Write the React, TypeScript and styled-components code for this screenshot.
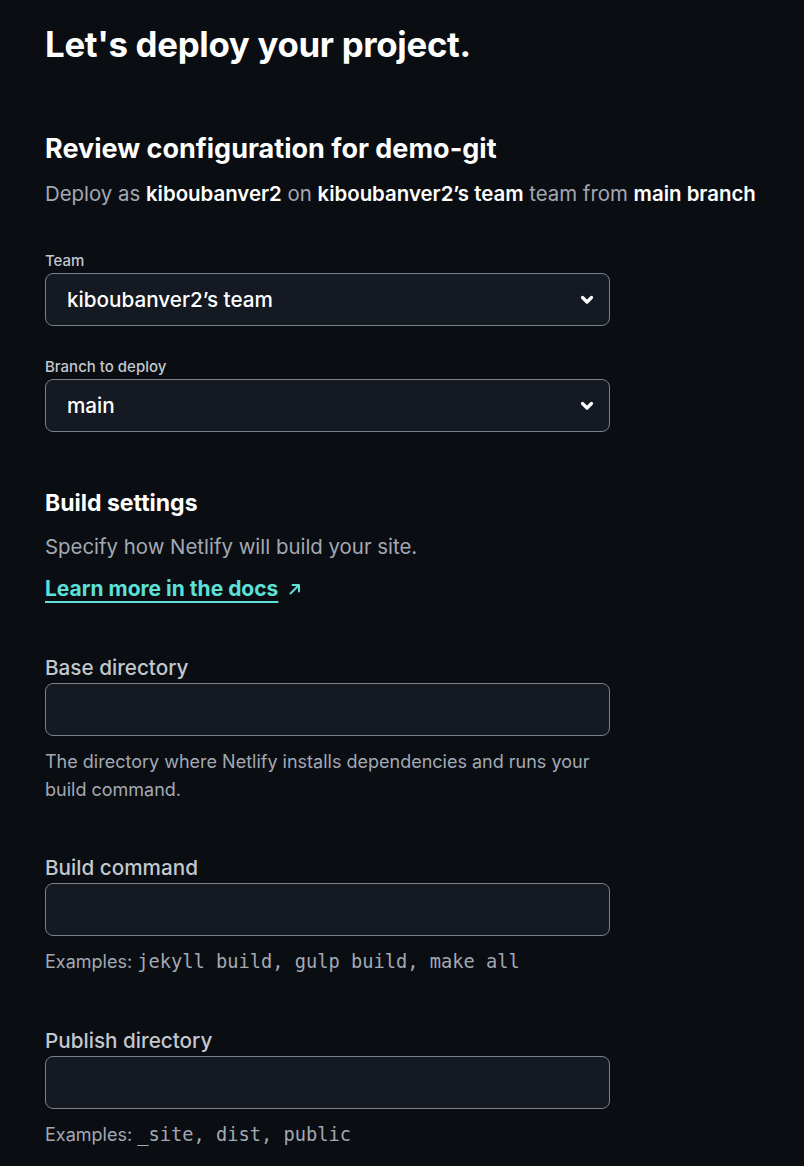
import React from "react";
import styled, { createGlobalStyle } from "styled-components";

const Global = createGlobalStyle`
  html, body { margin: 0; padding: 0; background: #0a0d12; }
  body { font-family: Inter, "Noto Sans", sans-serif; color: #ffffff; -webkit-font-smoothing: antialiased; }
`;

const Page = styled.main`
  min-height: 1166px;
  padding: 20px 45px 0 45px;
  box-sizing: border-box;
  background: #0a0d12;
`;

const Title = styled.h1`
  margin: 0;
  font-size: 34.8px;
  line-height: 48px;
  font-weight: 700;
  letter-spacing: -0.3px;
  color: #ffffff;
`;

const Section = styled.section<{ $top: number }>`
  margin-top: ${(p) => p.$top}px;
  display: flex;
  flex-direction: column;
`;

const Heading = styled.h2<{ $size: number }>`
  margin: 0;
  font-size: ${(p) => p.$size}px;
  line-height: 32px;
  font-weight: 700;
  color: #ffffff;
`;

const Lead = styled.p<{ $top: number }>`
  margin: ${(p) => p.$top}px 0 0 0;
  font-size: 20.4px;
  line-height: 28px;
  color: #a3a9b3;
  white-space: nowrap;
`;

const Strong = styled.strong`
  color: #ffffff;
  font-weight: 600;
`;

const Field = styled.div<{ $top: number }>`
  margin-top: ${(p) => p.$top}px;
  width: 565px;
  display: flex;
  flex-direction: column;
`;

const SmallLabel = styled.label`
  font-size: 15px;
  line-height: 20px;
  color: #c3c7ce;
  font-weight: 500;
  margin-bottom: 2px;
`;

const BigLabel = styled.label`
  font-size: 20.7px;
  line-height: 28px;
  color: #c3c7ce;
  font-weight: 500;
  margin-bottom: 1px;
`;

const SelectBox = styled.div`
  height: 53px;
  box-sizing: border-box;
  border: 1px solid #7b818b;
  border-radius: 8px;
  background: #151922;
  display: flex;
  align-items: center;
  justify-content: space-between;
  padding: 0 12px 0 21px;
  font-size: 20.7px;
  font-weight: 500;
  color: #ffffff;
`;

const Input = styled.div`
  height: 53px;
  box-sizing: border-box;
  border: 1px solid #7b818b;
  border-radius: 8px;
  background: #151922;
`;

const Help = styled.p`
  margin: 12px 0 0 0;
  font-size: 18px;
  line-height: 28px;
  color: #a3a9b3;
`;

const Mono = styled.code`
  font-family: "DejaVu Sans Mono", "Liberation Mono", monospace;
  font-size: 18.7px;
`;

const DocLink = styled.a`
  margin-top: 14px;
  display: inline-flex;
  align-items: center;
  gap: 9px;
  font-size: 21px;
  line-height: 28px;
  font-weight: 700;
  color: #5ce0d8;
  text-decoration: none;
`;

const LinkText = styled.span`
  text-decoration: underline;
  text-underline-offset: 5px;
  text-decoration-thickness: 2px;
`;

const Chevron = () => (
  <svg width="20" height="20" viewBox="0 0 20 20" fill="none">
    <path d="M5.5 7.5 L10 12 L14.5 7.5" stroke="#ffffff" strokeWidth="3.2" strokeLinecap="round" strokeLinejoin="round" />
  </svg>
);

const Arrow = () => (
  <svg width="16" height="16" viewBox="0 0 16 16" fill="none">
    <path d="M3.5 12.5 L12 4 M5.5 4 H12 V10.5" stroke="#5ce0d8" strokeWidth="2" strokeLinecap="round" strokeLinejoin="round" />
  </svg>
);

export default function App() {
  return (
    <>
      <Global />
      <Page>
        <Title>Let's deploy your project.</Title>

        <Section $top={65}>
          <Heading $size={27}>Review configuration for demo-git</Heading>
          <Lead $top={15}>
            Deploy as <Strong>kiboubanver2</Strong> on <Strong>kiboubanver2’s team</Strong> team from{" "}
            <Strong>main branch</Strong>
          </Lead>

          <Field $top={43}>
            <SmallLabel>Team</SmallLabel>
            <SelectBox>
              <span>kiboubanver2’s team</span>
              <Chevron />
            </SelectBox>
          </Field>

          <Field $top={31}>
            <SmallLabel>Branch to deploy</SmallLabel>
            <SelectBox>
              <span>main</span>
              <Chevron />
            </SelectBox>
          </Field>
        </Section>

        <Section $top={55}>
          <Heading $size={23}>Build settings</Heading>
          <Lead $top={14}>Specify how Netlify will build your site.</Lead>
          <div>
            <DocLink href="#">
              <LinkText>Learn more in the docs</LinkText>
              <Arrow />
            </DocLink>
          </div>

          <Field $top={51}>
            <BigLabel>Base directory</BigLabel>
            <Input />
            <Help>The directory where Netlify installs dependencies and runs your build command.</Help>
          </Field>

          <Field $top={50}>
            <BigLabel>Build command</BigLabel>
            <Input />
            <Help>
              Examples: <Mono>jekyll build, gulp build, make all</Mono>
            </Help>
          </Field>

          <Field $top={51}>
            <BigLabel>Publish directory</BigLabel>
            <Input />
            <Help>
              Examples: <Mono>_site, dist, public</Mono>
            </Help>
          </Field>
        </Section>
      </Page>
    </>
  );
}
